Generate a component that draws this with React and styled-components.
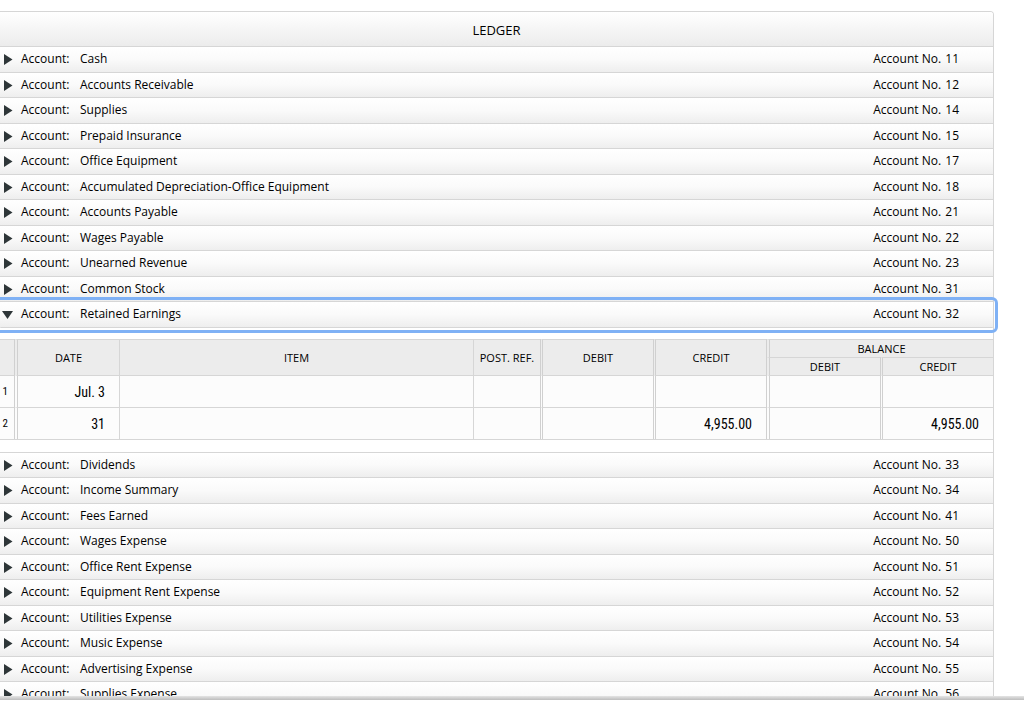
import React, { useState } from 'react';
import styled, { createGlobalStyle } from 'styled-components';

const GlobalStyle = createGlobalStyle`
  * {
    box-sizing: border-box;
  }
  body {
    margin: 0;
    background: #fff;
    color: #000;
    font-family: 'Open Sans', 'Noto Sans', sans-serif;
  }
`;

const Page = styled.div`
  display: flex;
  flex-direction: column;
  height: 100vh;
`;

const Scroller = styled.main`
  flex: 1;
  min-height: 0;
  overflow: hidden;
  padding: 11px 30px 0 0;
`;

const BottomBar = styled.footer`
  height: 7px;
  background: linear-gradient(#e4e4e4, #bdbdbd 4px, #fff 4px);
`;

const Panel = styled.section`
  border: 1px solid #d6d6d6;
  border-left: none;
  border-radius: 0 4px 0 0;
`;

const Title = styled.h1`
  margin: 0;
  height: 35px;
  border-bottom: 1px solid #d6d6d6;
  border-radius: 0 3px 0 0;
  background: linear-gradient(#fff, #ececec);
  font-size: 13px;
  font-weight: 400;
  line-height: 36px;
  text-align: center;
`;

const AccountList = styled.div`
  display: grid;
  grid-auto-rows: ${props => (props.$shortFirst ? '25px 26px' : '26px 25px')};
`;

const AccountButton = styled.button`
  display: flex;
  align-items: center;
  width: 100%;
  margin: 0;
  padding: 0 34px 1px 2px;
  border: none;
  border-bottom: 1px solid #d6d6d6;
  background: linear-gradient(#fff, #fafafa 50%, #eee);
  color: #000;
  font-family: inherit;
  font-size: 12px;
  line-height: 16px;
  text-align: left;
  outline: ${props => (props.$active ? '3px solid #7fb1f5' : 'none')};
  outline-offset: 2px;
  border-radius: ${props => (props.$active ? '1px' : '0')};
`;

const Arrow = styled.svg`
  width: 12px;
  height: 12px;
  margin-right: 7px;
  fill: #2e3638;
`;

const Label = styled.span`
  width: 59px;
`;

const Name = styled.span`
  flex: 1;
`;

const NumberLabel = styled.span`
  width: 72px;
`;

const Detail = styled.div`
  padding: 11px 0 12px;
  border-bottom: 1px solid #d6d6d6;
`;

const Table = styled.table`
  width: 100%;
  table-layout: fixed;
  border-collapse: separate;
  border-spacing: 0;
  border-bottom: 1px solid #d6d6d6;
`;

const borders = {
  none: 'none',
  single: '1px solid #d6d6d6',
  double: '3px double #d0d0d0',
  thick: '4px double #d0d0d0',
};

const Col = styled.col`
  width: ${props => props.$width || 'auto'};
`;

const Head = styled.th`
  height: ${props => (props.rowSpan === 2 ? '36px' : '18px')};
  padding: 0;
  border-top: 1px solid #d6d6d6;
  border-left: ${props => borders[props.$line || 'none']};
  background: #ececec;
  font-size: 11px;
  font-weight: 400;
  line-height: 16px;
`;

const Cell = styled.td`
  height: 32px;
  padding: 0 14px 0 0;
  border-top: 1px solid #d6d6d6;
  border-left: ${props => borders[props.$line || 'none']};
  background: #fcfcfc;
  font-family: 'Roboto Condensed', 'Liberation Sans', sans-serif;
  font-size: 14px;
  line-height: 20px;
  text-align: right;
`;

const RowNumber = styled(Cell)`
  padding: 0 6px 0 0;
  font-size: 11px;
`;

const before = [
  ['Cash', 11],
  ['Accounts Receivable', 12],
  ['Supplies', 14],
  ['Prepaid Insurance', 15],
  ['Office Equipment', 17],
  ['Accumulated Depreciation-Office Equipment', 18],
  ['Accounts Payable', 21],
  ['Wages Payable', 22],
  ['Unearned Revenue', 23],
  ['Common Stock', 31],
  ['Retained Earnings', 32],
];

const after = [
  ['Dividends', 33],
  ['Income Summary', 34],
  ['Fees Earned', 41],
  ['Wages Expense', 50],
  ['Office Rent Expense', 51],
  ['Equipment Rent Expense', 52],
  ['Utilities Expense', 53],
  ['Music Expense', 54],
  ['Advertising Expense', 55],
  ['Supplies Expense', 56],
];

const entries = [
  { date: 'Jul. 3', credit: '', balance: '' },
  { date: '31', credit: '4,955.00', balance: '4,955.00' },
];

function Account({ name, number, open, onToggle }) {
  return (
    <AccountButton type="button" aria-expanded={open} $active={open} onClick={onToggle}>
      <Arrow viewBox="0 0 12 12" aria-hidden="true">
        {open ? <path d="M0 3h11L5.5 11z" /> : <path d="M2 1l8.5 5.5L2 12z" />}
      </Arrow>
      <Label>Account:</Label>
      <Name>{name}</Name>
      <NumberLabel>Account No.</NumberLabel>
      <span>{number}</span>
    </AccountButton>
  );
}

function LedgerTable() {
  return (
    <Detail>
      <Table>
        <colgroup>
          <Col $width="14px" />
          <Col $width="105px" />
          <Col />
          <Col $width="67px" />
          <Col $width="113px" />
          <Col $width="113px" />
          <Col $width="114px" />
          <Col $width="113px" />
        </colgroup>
        <thead>
          <tr>
            <Head rowSpan={2} />
            <Head rowSpan={2} $line="thick">DATE</Head>
            <Head rowSpan={2} $line="single">ITEM</Head>
            <Head rowSpan={2} $line="single">POST. REF.</Head>
            <Head rowSpan={2} $line="double">DEBIT</Head>
            <Head rowSpan={2} $line="double">CREDIT</Head>
            <Head colSpan={2} $line="thick">BALANCE</Head>
          </tr>
          <tr>
            <Head $line="thick">DEBIT</Head>
            <Head $line="double">CREDIT</Head>
          </tr>
        </thead>
        <tbody>
          {entries.map((entry, i) => (
            <tr key={entry.date}>
              <RowNumber>{i + 1}</RowNumber>
              <Cell $line="thick">{entry.date}</Cell>
              <Cell $line="single" />
              <Cell $line="single" />
              <Cell $line="double" />
              <Cell $line="double">{entry.credit}</Cell>
              <Cell $line="thick" />
              <Cell $line="double">{entry.balance}</Cell>
            </tr>
          ))}
        </tbody>
      </Table>
    </Detail>
  );
}

function App() {
  const [openNumber, setOpenNumber] = useState(32);

  const renderAccount = ([name, number]) => (
    <Account
      key={number}
      name={name}
      number={number}
      open={openNumber === number}
      onToggle={() => setOpenNumber(openNumber === number ? null : number)}
    />
  );

  return (
    <Page>
      <GlobalStyle />
      <Scroller>
        <Panel>
          <Title>LEDGER</Title>
          <AccountList>{before.map(renderAccount)}</AccountList>
          {openNumber === 32 && <LedgerTable />}
          <AccountList $shortFirst>{after.map(renderAccount)}</AccountList>
        </Panel>
      </Scroller>
      <BottomBar />
    </Page>
  );
}

export default App;
